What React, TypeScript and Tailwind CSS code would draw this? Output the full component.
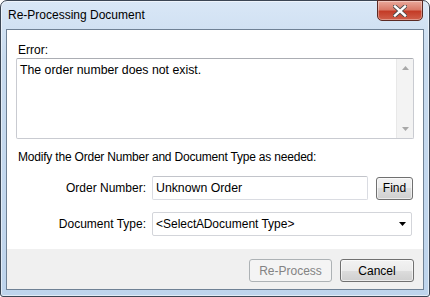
function CloseButton() {
  return (
    <div className="ml-auto -mt-px mr-[1px] w-[46px] h-[21px] rounded-b-[5px] border border-[#5b2a24] bg-[linear-gradient(to_bottom,#e9a99b_0%,#d97a68_45%,#c43c27_55%,#d0604b_100%)] shadow-[inset_0_0_0_1px_rgba(255,255,255,0.35)] flex items-center justify-center">
      <svg width="14" height="12" viewBox="0 0 14 12">
        <path d="M2 1.5 L12 10.5 M12 1.5 L2 10.5" stroke="#4a4a4a" strokeWidth="4.2" strokeLinecap="square" />
        <path d="M2 1.5 L12 10.5 M12 1.5 L2 10.5" stroke="#ffffff" strokeWidth="2.4" strokeLinecap="square" />
      </svg>
    </div>
  )
}

function Win7Button({ label, width, disabled }: { label: string; width: string; disabled?: boolean }) {
  return (
    <div
      className={
        disabled
          ? `${width} h-[23px] rounded-[3px] border border-[#adb2b5] bg-[#f4f4f4] text-[#838383] flex items-center justify-center`
          : `${width} h-[23px] rounded-[3px] border border-[#707070] bg-[linear-gradient(to_bottom,#f2f2f2_0%,#ebebeb_50%,#dddddd_50%,#cfcfcf_100%)] shadow-[inset_0_0_0_1px_rgba(255,255,255,0.6)] text-black flex items-center justify-center`
      }
    >
      {label}
    </div>
  )
}

function App() {
  return (
    <div className="w-[430px] h-[297px] overflow-hidden font-['Liberation_Sans',Arial,sans-serif] text-[12px] leading-[14px] text-black">
      <div className="w-full h-full rounded-t-[7px] rounded-b-[3px] border border-[#3b4654] bg-[linear-gradient(to_bottom,#d9e7f6_0%,#c8dbef_20%,#bed4ec_100%)] shadow-[inset_0_0_0_1px_rgba(255,255,255,0.55)] flex flex-col px-[5px] pb-[6px]">
        <div className="h-[28px] flex items-start">
          <div className="pl-[2px] h-[28px] flex items-center text-[12px]">Re-Processing Document</div>
          <CloseButton />
        </div>

        <div className="flex-1 border border-[#6f8195] bg-white flex flex-col">
          <div className="flex-1 px-[9px] pt-[13px] flex flex-col">
            <div className="pl-[2px] h-[14px]">Error:</div>
            <div className="mt-px h-[81px] border border-[#c9cbd1] border-t-[#abadb3] rounded-[2px] flex">
              <div className="flex-1 pl-[3px] pt-[4px] text-[12.3px]">The order number does not exist.</div>
              <div className="w-[17px] bg-[#f3f3f3] border-l border-[#e8e8e8] flex flex-col justify-between items-center py-[7px]">
                <svg width="7" height="4" viewBox="0 0 7 4">
                  <path d="M0 4 L3.5 0 L7 4 Z" fill="#a8a8a8" />
                </svg>
                <svg width="7" height="4" viewBox="0 0 7 4">
                  <path d="M0 0 L3.5 4 L7 0 Z" fill="#a8a8a8" />
                </svg>
              </div>
            </div>

            <div className="pl-[2px] mt-[11px] h-[14px] tracking-[-0.2px]">Modify the Order Number and Document Type as needed:</div>

            <div className="mt-[12px] flex items-center">
              <div className="w-[130px] text-right">Order Number:</div>
              <div className="ml-[6px] w-[216px] h-[24px] border border-[#dadce2] border-t-[#c2c4ca] rounded-[2px] flex items-center pl-[3px] text-[12.3px]">
                Unknown Order
              </div>
              <div className="ml-[8px]">
                <Win7Button label="Find" width="w-[37px]" />
              </div>
            </div>

            <div className="mt-[12px] flex items-center">
              <div className="w-[130px] text-right">Document Type:</div>
              <div className="ml-[6px] w-[260px] h-[24px] border border-[#d3d5da] rounded-[2px] flex items-center pl-[3px] pr-[5px]">
                <span className="[word-spacing:-3px]">&lt;Select A Document</span>
                <span className="ml-[3px]">Type&gt;</span>
                <svg className="ml-auto" width="7" height="4" viewBox="0 0 7 4">
                  <path d="M0 0 L3.5 4 L7 0 Z" fill="#000000" />
                </svg>
              </div>
            </div>
          </div>

          <div className="h-[40px] bg-[#f0f0f0] flex justify-end items-start pt-[10px] pr-[9px] gap-[8px]">
            <Win7Button label="Re-Process" width="w-[83px]" disabled />
            <Win7Button label="Cancel" width="w-[74px]" />
          </div>
        </div>
      </div>
    </div>
  )
}

export default App
